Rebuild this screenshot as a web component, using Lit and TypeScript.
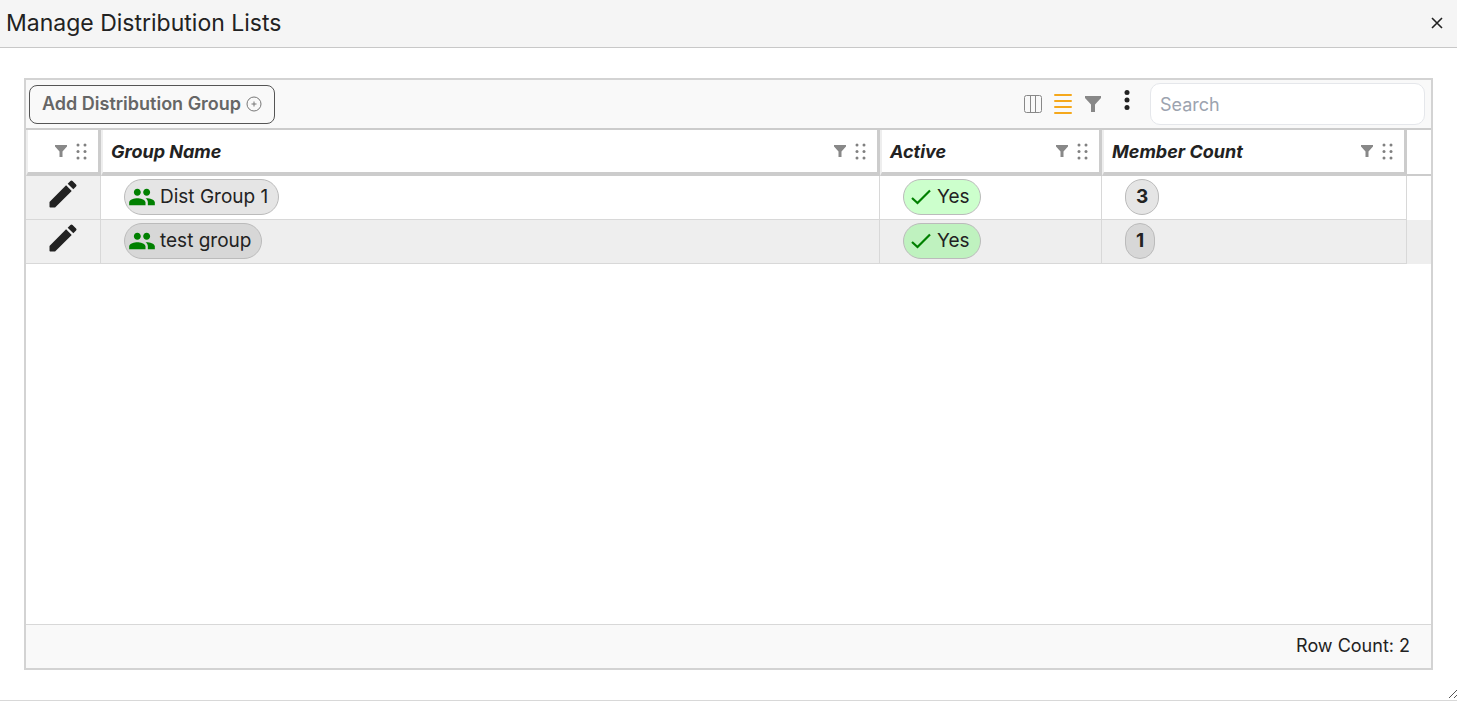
import { LitElement, html, css, svg } from "lit";
import { customElement, state } from "lit/decorators.js";

interface Group {
  name: string;
  active: boolean;
  members: number;
}

const funnel = (width: number, height: number) => html`<svg width=${width} height=${height} viewBox="0 0 16 16" aria-hidden="true">
  <path fill="#888" d="M0 0h16v2L10 8.5V16H6V8.5L0 2z" />
</svg>`;

const grip = html`<svg width="12" height="17" viewBox="0 0 12 17" aria-hidden="true">
  ${[2, 9].map((x) => [2, 8.5, 15].map((y) => svg`<circle cx=${x} cy=${y} r="1.5" fill="#808080" />`))}
</svg>`;

const pencil = html`<svg width="36" height="36" viewBox="0 0 24 24" aria-hidden="true">
  <path fill="#222" d="M3 17.46v3.04c0 .28.22.5.5.5h3.04c.13 0 .26-.05.35-.15L17.81 9.94l-3.75-3.75L3.15 17.1q-.15.15-.15.36M20.71 7.04a.996.996 0 0 0 0-1.41l-2.34-2.34a.996.996 0 0 0-1.41 0l-1.83 1.83 3.75 3.75z" />
</svg>`;

const people = html`<svg width="28" height="28" viewBox="0 0 24 24" aria-hidden="true">
  <path fill="#008000" d="M16 11c1.66 0 2.99-1.34 2.99-3S17.66 5 16 5s-3 1.34-3 3 1.34 3 3 3m-8 0c1.66 0 2.99-1.34 2.99-3S9.66 5 8 5 5 6.34 5 8s1.34 3 3 3m0 2c-2.33 0-7 1.17-7 3.5V19h14v-2.5c0-2.33-4.67-3.5-7-3.5m8 0c-.29 0-.62.02-.97.05 1.16.84 1.97 1.97 1.97 3.45V19h6v-2.5c0-2.33-4.67-3.5-7-3.5" />
</svg>`;

const check = html`<svg width="20" height="16" viewBox="0 0 20 16" aria-hidden="true">
  <path d="M1 9l5.5 5L19 1.5" fill="none" stroke="#008000" stroke-width="2.2" />
</svg>`;

@customElement("app-root")
export class AppRoot extends LitElement {
  @state() private search = "";

  private groups: Group[] = [
    { name: "Dist Group 1", active: true, members: 3 },
    { name: "test group", active: true, members: 1 },
  ];

  static styles = css`
    :host {
      display: flex;
      flex-direction: column;
      box-sizing: border-box;
      height: 100vh;
      background: #fff;
      border-bottom: 1px solid #d8d8d8;
      color: #222;
      font-family: Inter, "Liberation Sans", sans-serif;
      font-size: 18px;
      line-height: 24px;
    }
    * { box-sizing: border-box; }
    button {
      font: inherit;
      color: inherit;
      background: none;
      border: 0;
      padding: 0;
      cursor: pointer;
    }
    svg { display: block; flex: none; }
    .titlebar {
      display: flex;
      align-items: center;
      justify-content: space-between;
      height: 48px;
      padding: 0 14px 2px 6px;
      background: #f5f5f5;
      border-bottom: 1px solid #c8c8c8;
    }
    h1 { margin: 0; font-size: 23px; font-weight: 400; line-height: 32px; }
    .body {
      flex: 1;
      min-height: 0;
      display: flex;
      flex-direction: column;
      padding: 30px 24px 0;
    }
    .grid {
      flex: 1;
      min-height: 0;
      display: flex;
      flex-direction: column;
      border: 2px solid #d3d3d3;
    }
    .toolbar {
      display: flex;
      align-items: center;
      height: 50px;
      padding: 0 6px 0 3px;
      background: #f9f9f9;
      border-bottom: 2px solid #ccc;
    }
    .add {
      display: flex;
      align-items: center;
      gap: 5px;
      height: 39px;
      padding: 0 12px;
      border: 1px solid #555;
      border-radius: 8px;
      font-weight: 600;
      color: #666;
      white-space: nowrap;
    }
    .tools {
      display: flex;
      align-items: center;
      gap: 12px;
      margin-left: auto;
    }
    .search {
      width: 275px;
      height: 42px;
      margin-left: 4px;
      padding: 0 9px;
      border: 1px solid #e5e7eb;
      border-radius: 10px;
      background: #fff;
      font: inherit;
      color: #222;
    }
    .search::placeholder { color: #9ca3af; opacity: 1; }
    .scroll { flex: 1; min-height: 0; overflow: auto; }
    table {
      width: 100%;
      table-layout: fixed;
      border-collapse: separate;
      border-spacing: 0;
    }
    .c-edit { width: 75px; }
    .c-active { width: 222px; }
    .c-count { width: 305px; }
    .c-rest { width: 24px; }
    th {
      height: 46px;
      padding: 0;
      border-left: 2px solid #eee;
      border-right: 3px solid #ccc;
      border-bottom: 4px solid #ccc;
      text-align: left;
      font-weight: 700;
      font-style: italic;
    }
    .head {
      display: flex;
      align-items: center;
      height: 42px;
      padding: 0 10px 0 8px;
    }
    .head .label { flex: 1; padding-top: 2px; white-space: nowrap; }
    .head .actions { display: flex; align-items: center; gap: 9px; }
    .rest { border: 0; }
    th.rest { border-bottom: 2px solid #ccc; }
    td {
      height: 44px;
      padding: 0 0 2px 23px;
      border-right: 1px solid #d8d8d8;
      border-bottom: 1px solid #d8d8d8;
    }
    td.rest { border: 0; }
    tbody tr:nth-child(even) td { background: #eee; }
    tbody td.edit, tbody tr:nth-child(even) td.edit { padding: 0 0 7px 19px; background: #f0f0f0; }
    .edit button { display: block; }
    .chip {
      display: inline-flex;
      align-items: center;
      gap: 4px;
      height: 36px;
      padding: 1px 10px 0 3px;
      border: 1px solid #bbb;
      border-radius: 18px;
      background: #e5e5e5;
      vertical-align: middle;
      white-space: nowrap;
      font-size: 19px;
    }
    .chip.yes { gap: 6px; padding-left: 7px; }
    .chip.yes { background: #cfc; }
    .chip.count { padding: 1px 10px 0; font-weight: 700; }
    tr:nth-child(even) .chip { background: #d7d7d7; }
    tr:nth-child(even) .chip.yes { background: #bff2bf; }
    .footer {
      height: 44px;
      padding: 9px 21px 0;
      background: #f9f9f9;
      border-top: 1px solid #d8d8d8;
      text-align: right;
    }
    .bottom { height: 30px; display: flex; justify-content: flex-end; align-items: flex-end; }
    .bottom svg { margin: 0 -24px 2px 0; }
  `;

  private headCell(label: string) {
    return html`<th scope="col">
      <div class="head">
        <span class="label">${label}</span>
        <span class="actions">
          <button aria-label="Filter ${label}">${funnel(12, 12)}</button>
          <button aria-label="Move ${label}">${grip}</button>
        </span>
      </div>
    </th>`;
  }

  private onSearch(e: Event) {
    this.search = (e.target as HTMLInputElement).value;
  }

  render() {
    const q = this.search.toLowerCase();
    const rows = this.groups.filter((g) => g.name.toLowerCase().includes(q));
    return html`
      <header class="titlebar">
        <h1>Manage Distribution Lists</h1>
        <button aria-label="Close">
          <svg width="12" height="12" viewBox="0 0 12 12" aria-hidden="true">
            <path d="M1 1l10 10M11 1L1 11" stroke="#222" stroke-width="1.6" />
          </svg>
        </button>
      </header>
      <main class="body">
        <section class="grid">
          <div class="toolbar">
            <button class="add">
              Add Distribution Group
              <svg width="16" height="16" viewBox="0 0 16 16" fill="none" stroke="#777" aria-hidden="true">
                <circle cx="8" cy="8" r="7" />
                <path d="M5.5 8h5M8 5.5v5" />
              </svg>
            </button>
            <div class="tools">
              <button aria-label="Columns">
                <svg width="18" height="18" viewBox="0 0 18 18" fill="none" stroke="#888" aria-hidden="true">
                  <rect x=".5" y=".5" width="17" height="17" rx="2" />
                  <path d="M6.5 1v16M11.5 1v16" />
                </svg>
              </button>
              <button aria-label="Row density">
                <svg width="18" height="20" viewBox="0 0 18 20" aria-hidden="true">
                  <path d="M1 1h16M1 7h16M1 13h16M1 19h16" stroke="#f5a81c" stroke-width="2" stroke-linecap="round" />
                </svg>
              </button>
              <button aria-label="Filters">${funnel(18, 16)}</button>
              <button aria-label="More options">
                <svg width="32" height="28" viewBox="0 0 32 28" fill="#222" aria-hidden="true">
                  <circle cx="13" cy="2.5" r="2.5" /><circle cx="13" cy="10" r="2.5" /><circle cx="13" cy="17.5" r="2.5" />
                </svg>
              </button>
            </div>
            <input class="search" type="text" placeholder="Search" aria-label="Search" .value=${this.search} @input=${this.onSearch} />
          </div>
          <div class="scroll">
            <table>
              <colgroup>
                <col class="c-edit" /><col /><col class="c-active" /><col class="c-count" /><col class="c-rest" />
              </colgroup>
              <thead>
                <tr>
                  ${this.headCell("")} ${this.headCell("Group Name")} ${this.headCell("Active")}
                  ${this.headCell("Member Count")}
                  <th class="rest"></th>
                </tr>
              </thead>
              <tbody>
                ${rows.map(
                  (g) => html`<tr>
                    <td class="edit"><button aria-label="Edit ${g.name}">${pencil}</button></td>
                    <td><span class="chip">${people}${g.name}</span></td>
                    <td>${g.active ? html`<span class="chip yes">${check}Yes</span>` : "No"}</td>
                    <td><span class="chip count">${g.members}</span></td>
                    <td class="rest"></td>
                  </tr>`
                )}
              </tbody>
            </table>
          </div>
          <div class="footer">Row Count: ${rows.length}</div>
        </section>
        <div class="bottom">
          <svg width="8" height="8" viewBox="0 0 8 8" stroke="#555" aria-hidden="true"><path d="M0 8L8 0M5 8l3-3" /></svg>
        </div>
      </main>
    `;
  }
}
